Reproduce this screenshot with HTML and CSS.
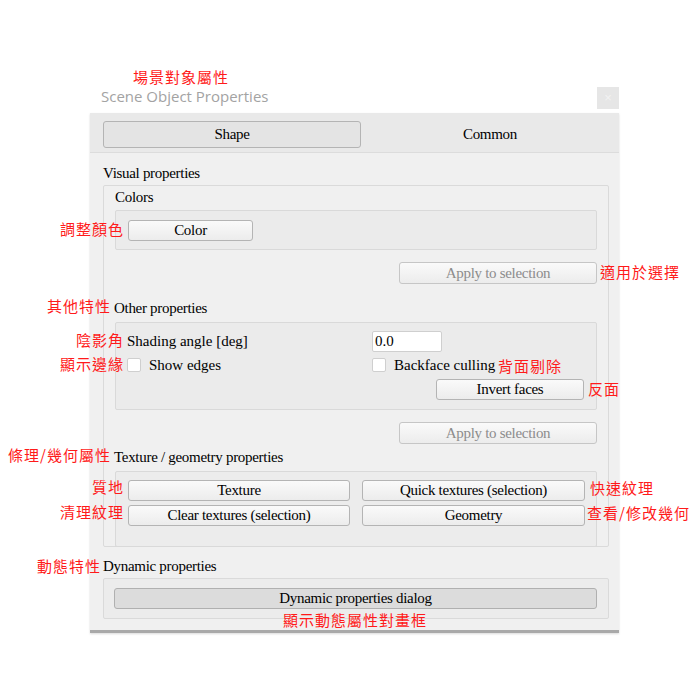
FILE: index.html
```html
<!DOCTYPE html>
<html lang="zh-Hant">
<head>
    <meta charset="UTF-8">
    <meta name="viewport" content="width=device-width, initial-scale=1.0">
    <title>Scene Object Properties</title>
    <link rel="stylesheet" href="styles.css">
</head>
<body>
    <div class="stage">
        <div class="window">
            <div class="titlebar">
                <span class="title">Scene Object Properties</span>
                <span class="close">×</span>
            </div>
            <div class="panel">
                <div class="tabs">
                    <div class="tab active">Shape</div>
                    <div class="tab">Common</div>
                </div>
                <div class="content">
                    <div class="label">Visual properties</div>
                    <div class="group visual">
                        <div class="label">Colors</div>
                        <div class="inner colors">
                            <button class="btn color-btn">Color</button>
                        </div>
                        <div class="row-right">
                            <button class="btn apply" disabled>Apply to selection</button>
                        </div>

                        <div class="label sub other-label">Other properties</div>
                        <div class="inner other">
                            <div class="field-row">
                                <span class="left-col">Shading angle [deg]</span>
                                <input class="num" type="text" value="0.0">
                            </div>
                            <div class="field-row">
                                <label class="left-col check"><span class="box"></span>Show edges</label>
                                <label class="check"><span class="box"></span>Backface culling</label>
                            </div>
                            <div class="field-row invert-row">
                                <button class="btn invert">Invert faces</button>
                            </div>
                        </div>
                        <div class="row-right">
                            <button class="btn apply" disabled>Apply to selection</button>
                        </div>

                        <div class="label sub texture-label">Texture / geometry properties</div>
                        <div class="inner texture">
                            <button class="btn">Texture</button>
                            <button class="btn">Quick textures (selection)</button>
                            <button class="btn">Clear textures (selection)</button>
                            <button class="btn">Geometry</button>
                        </div>
                    </div>

                    <div class="label dyn-label">Dynamic properties</div>
                    <div class="group dynamic">
                        <button class="btn dyn-btn">Dynamic properties dialog</button>
                    </div>
                </div>
            </div>
        </div>

        <!-- red annotations -->
        <span class="note" style="left:133px;top:68px">場景對象屬性</span>
        <span class="note" style="left:60px;top:220px">調整顏色</span>
        <span class="note" style="left:600px;top:263px">適用於選擇</span>
        <span class="note" style="left:47px;top:297px">其他特性</span>
        <span class="note" style="left:76px;top:331px">陰影角</span>
        <span class="note" style="left:60px;top:355px">顯示邊緣</span>
        <span class="note" style="left:498px;top:357px">背面剔除</span>
        <span class="note" style="left:588px;top:380px">反面</span>
        <span class="note" style="left:8px;top:446px">條理/幾何屬性</span>
        <span class="note" style="left:92px;top:478px">質地</span>
        <span class="note" style="left:590px;top:479px">快速紋理</span>
        <span class="note" style="left:60px;top:503px">清理紋理</span>
        <span class="note" style="left:587px;top:504px">查看/修改幾何</span>
        <span class="note" style="left:37px;top:557px">動態特性</span>
        <span class="note" style="left:283px;top:611px">顯示動態屬性對畫框</span>
    </div>
</body>
</html>
```

FILE: styles.css
```css
body {
    margin: 0;
    background: #fff;
    font-family: "Liberation Serif", "Noto Sans CJK TC", serif;
    font-size: 15px;
    color: #000;
}
.stage {
    position: relative;
    width: 700px;
    height: 700px;
    overflow: hidden;
}
.window {
    width: 529px;
    margin: 87px 0 0 90px;
}
.titlebar {
    height: 26px;
    display: flex;
    justify-content: space-between;
    align-items: flex-start;
}
.title {
    padding-left: 11px;
    font-family: "Open Sans", "Noto Sans", sans-serif;
    font-size: 15px;
    line-height: 18px;
    color: #a3a3a3;
}
.close {
    width: 22px;
    height: 22px;
    background: #e6e6e6;
    color: #f2f2f2;
    font-family: "Liberation Sans", sans-serif;
    font-size: 13px;
    line-height: 22px;
    text-align: center;
}
.panel {
    height: 517px;
    background: #f0f0f0;
    border-bottom: 3px solid #a9a9a9;
    box-shadow: 0 1px 2px rgba(0, 0, 0, 0.15);
}
.tabs {
    display: grid;
    grid-template-columns: 258px 1fr;
    height: 27px;
    padding: 8px 0 4px 13px;
    background: #e9e9e9;
    border-bottom: 1px solid #dcdcdc;
}
.tab {
    display: flex;
    align-items: center;
    justify-content: center;
    font-size: 15px;
    letter-spacing: -0.3px;
}
.tab.active {
    background: #e4e4e4;
    border: 1px solid #b4b4b4;
    border-radius: 3px;
}
.content {
    padding: 12px 10px 0 13px;
}
.label {
    font-size: 15px;
    line-height: 17px;
    letter-spacing: -0.3px;
}
.label.sub {
    margin-left: -1px;
}
.other-label {
    margin: 16px 0 5px;
}
.texture-label {
    margin: 5px 0 5px;
}
.group {
    border: 1px solid #dadada;
    border-radius: 2px;
    margin-top: 3px;
}
.group.visual {
    padding: 3px 11px 0 11px;
    height: 357px;
}
.inner {
    border: 1px solid #d9d9d9;
    border-radius: 2px;
    background: #ebebeb;
}
.inner.colors {
    margin-top: 4px;
    height: 40px;
    padding: 9px 0 0 12px;
    box-sizing: border-box;
}
.row-right {
    display: flex;
    justify-content: flex-end;
    margin-top: 12px;
}
.btn {
    font-family: "Liberation Serif", serif;
    font-size: 15px;
    letter-spacing: -0.3px;
    color: #000;
    height: 21px;
    padding: 0;
    background: linear-gradient(#fafafa, #ececec);
    border: 1px solid #b4b4b4;
    border-radius: 3px;
}
.color-btn {
    width: 125px;
}
.apply {
    width: 198px;
    height: 22px;
    color: #8c8c8c;
    border-color: #c6c6c6;
}
.inner.other {
    height: 88px;
    box-sizing: border-box;
    padding: 8px 12px 0 11px;
}
.field-row {
    display: flex;
    align-items: center;
    height: 20px;
    margin-bottom: 4px;
}
.left-col {
    width: 245px;
}
.num {
    width: 70px;
    height: 21px;
    box-sizing: border-box;
    border: 1px solid #cfcfcf;
    border-radius: 2px;
    background: #fff;
    font-family: "Liberation Serif", serif;
    font-size: 15px;
    padding: 0 2px;
    margin: 0;
}
.check {
    display: flex;
    align-items: center;
    gap: 8px;
}
.box {
    width: 14px;
    height: 14px;
    box-sizing: border-box;
    background: #fff;
    border: 1px solid #cfcfcf;
    border-radius: 2px;
}
.invert-row {
    justify-content: flex-end;
    height: 21px;
}
.invert {
    width: 148px;
}
.inner.texture {
    display: grid;
    grid-template-columns: 222px 223px;
    grid-auto-rows: 21px;
    align-content: start;
    column-gap: 12px;
    row-gap: 4px;
    height: 76px;
    box-sizing: border-box;
    padding: 8px 0 0 12px;
    background: #ececec;
}
.dyn-label {
    margin-top: 11px;
}
.group.dynamic {
    margin-top: 3px;
    height: 41px;
    box-sizing: border-box;
    padding: 9px 11px 0 10px;
    background: #ececec;
}
.dyn-btn {
    width: 100%;
    background: #dcdcdc;
    border-color: #b0b0b0;
}
.note {
    position: absolute;
    font-family: "Noto Sans CJK TC", sans-serif;
    font-size: 15px;
    line-height: 18px;
    letter-spacing: 1px;
    color: #ff1a1a;
    white-space: nowrap;
}
```
